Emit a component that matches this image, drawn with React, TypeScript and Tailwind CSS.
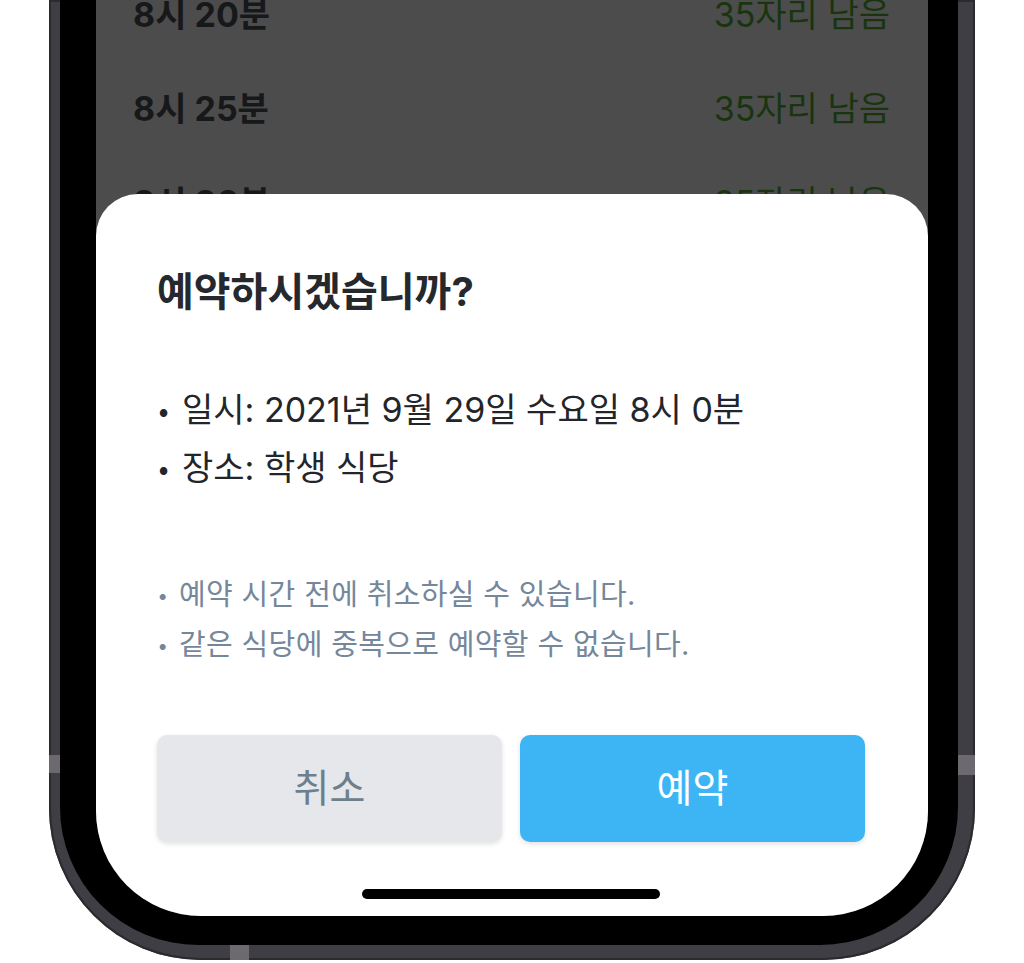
import React from 'react';

const slots = [
  { time: '8시 15분', seats: '35자리 남음' },
  { time: '8시 20분', seats: '35자리 남음' },
  { time: '8시 25분', seats: '35자리 남음' },
  { time: '8시 30분', seats: '35자리 남음' },
  { time: '8시 35분', seats: '35자리 남음' },
];

const font = { fontFamily: 'Inter, "Noto Sans CJK KR", sans-serif' };

function ConfirmSheet() {
  return (
    <div className="absolute inset-x-0 bottom-0 top-[194px] bg-white rounded-t-[42px] flex flex-col px-[61px] pt-[74px]">
      {/* Title */}
      <h2 className="text-[40px] leading-[48px] font-bold text-[#25282d]">
        예약하시겠습니까?
      </h2>

      {/* Details */}
      <div className="mt-[65px] pl-[2px] text-[34px] leading-[58px] text-[#22252a]">
        <p>
          <span className="inline-block w-[23px] text-[10px] leading-none align-middle">●</span>
          일시: 2021년 9월 29일 수요일 8시 0분
        </p>
        <p>
          <span className="inline-block w-[23px] text-[10px] leading-none align-middle">●</span>
          장소: 학생 식당
        </p>
      </div>

      {/* Notes */}
      <div className="mt-[73px] pl-[2px] text-[29px] leading-[50px] tracking-[0.35px] text-[#75879a]">
        <p>
          <span className="inline-block w-[20px] text-[8px] leading-none align-middle">●</span>
          예약 시간 전에 취소하실 수 있습니다.
        </p>
        <p>
          <span className="inline-block w-[20px] text-[8px] leading-none align-middle">●</span>
          같은 식당에 중복으로 예약할 수 없습니다.
        </p>
      </div>

      {/* Actions */}
      <div className="mt-[65px] flex gap-[18px] pr-[2px]">
        <button
          type="button"
          className="flex-1 h-[107px] rounded-[10px] bg-[#e6e7eb] text-[39px] text-[#6d7e8c] shadow-[0_2px_5px_rgba(0,0,0,0.12)]"
        >
          취소
        </button>
        <button
          type="button"
          className="flex-1 h-[107px] rounded-[10px] bg-[#3db5f5] text-[39px] text-white shadow-[0_2px_5px_rgba(0,0,0,0.12)]"
        >
          예약
        </button>
      </div>

      {/* Home indicator */}
      <div className="mt-[47px] flex justify-center">
        <div className="w-[298px] h-[10px] rounded-full bg-black ml-[-2px]" />
      </div>
    </div>
  );
}

export default function App() {
  return (
    <div className="w-[1024px] h-[963px] bg-white overflow-hidden" style={font}>
      <div className="relative ml-[49px] w-[926px] h-[960px] rounded-b-[152px] bg-[#3e3e44] shadow-[inset_0_0_0_2px_#2a2a2f] pl-[11px] pr-[17px] pb-[15px]">
        {/* antenna bands */}
        <div className="absolute left-0 top-[755px] w-[11px] h-[18px] bg-[#6c6a6e]" />
        <div className="absolute right-0 top-[755px] w-[17px] h-[20px] bg-[#6c6a6e]" />
        <div className="absolute bottom-0 left-[181px] w-[19px] h-[15px] bg-[#6c6a6e]" />

        <div className="h-full bg-black rounded-b-[138px] pl-[36px] pr-[30px] pb-[29px]">
          <div className="relative h-full overflow-hidden rounded-b-[105px] bg-[#4c4c4c]">
            {/* Time slot list (dimmed) */}
            <div className="-mt-[127px] flex flex-col">
              {slots.map((s) => (
                <div key={s.time} className="h-[94px] flex items-center justify-between pl-[37px] pr-[38px]">
                  <span className="text-[34px] font-bold text-[#17181a]">{s.time}</span>
                  <span className="text-[34px] text-[#183510]">{s.seats}</span>
                </div>
              ))}
            </div>

            <ConfirmSheet />
          </div>
        </div>
      </div>
    </div>
  );
}
